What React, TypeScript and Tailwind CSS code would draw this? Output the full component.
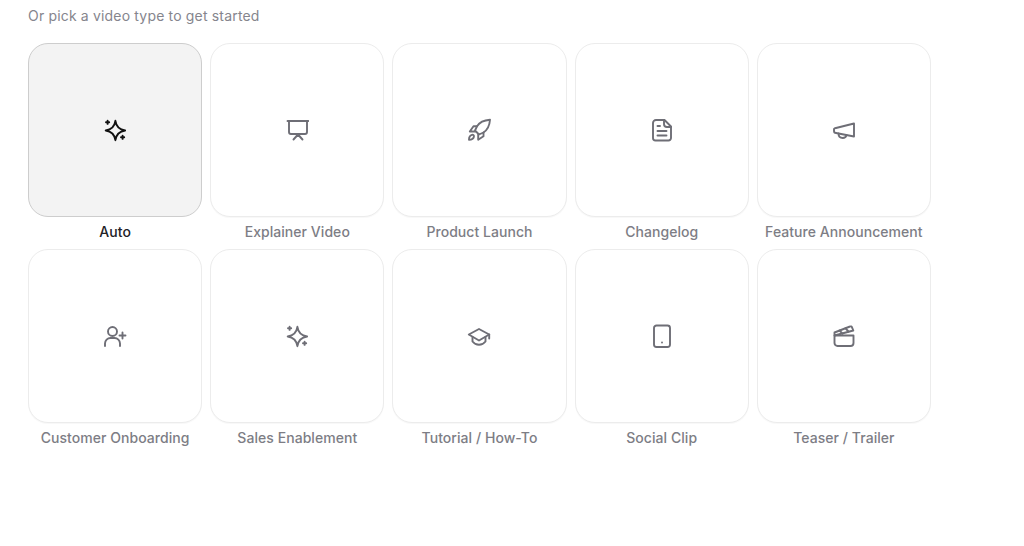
import { ReactNode } from "react";

const S = ({ children }: { children: ReactNode }) => (
  <svg width="24" height="24" viewBox="0 0 24 24" fill="none" stroke="currentColor" strokeWidth="1.9" strokeLinecap="round" strokeLinejoin="round">
    {children}
  </svg>
);

const Sparkle = () => (
  <S>
    <path d="M12.400 2.800C13.200 8.500 16 11.500 22.100 12.500 16 13.500 13.200 16.500 12.400 22.200 11.600 16.500 8.800 13.500 2.700 12.500 8.800 11.500 11.600 8.500 12.400 2.800Z" />
    <path d="M4.600 2.700v3.200M3 4.300h3.200" />
    <path d="M19.600 17.700v3.200M18 19.300h3.200" />
  </S>
);

const icons: Record<string, ReactNode> = {
  auto: <Sparkle />,
  explainer: (
    <S>
      <path d="M2.500 3h21" />
      <path d="M4 3v11a2 2 0 0 0 2 2h14a2 2 0 0 0 2-2V3" />
      <path d="m8.500 21.500 4.500-5 4.500 5" />
    </S>
  ),
  rocket: (
    <S>
      <path d="M23 1.800C16.500 2.300 12.500 4.300 10 8.300L8 12.500l4 4 4.500-2C20.500 12 22.500 8.300 23 1.800Z" />
      <path d="M10 8.300H6.500L2.800 13.500h5.400" />
      <path d="M16.500 14.500v3.700l-5.300 3.500v-5.400" />
      <path d="M5 16.800c-2 .5-3 2.300-3 4.900 2.600 0 4.400-1 4.900-3 .3-1.200-.7-2.200-1.900-1.900Z" />
    </S>
  ),
  file: (
    <S>
      <path d="M6 2h8.500L21 8.500V20a2.500 2.500 0 0 1-2.500 2.500h-13A2.500 2.500 0 0 1 3 20V5a3 3 0 0 1 3-3Z" />
      <path d="M14 2v4a3 3 0 0 0 3 3h4" />
      <path d="M7.500 8h2.500M7.500 13h9M7.500 17.500h9" />
    </S>
  ),
  megaphone: (
    <S>
      <path d="M22 5.500v13L4 15a2 2 0 0 1-2-2v-2a2 2 0 0 1 2-1L22 5.500Z" />
      <path d="M6.500 15.500c0 3 1.700 4.500 4.300 4.500 2 0 3.200-1 3.700-3" />
    </S>
  ),
  user: (
    <S>
      <circle cx="9.500" cy="7.500" r="4.500" />
      <path d="M2 22v-2.500A5.500 5.500 0 0 1 7.500 14h4a5.500 5.500 0 0 1 5.500 5.500V22" />
      <path d="M19.500 8.500v6M16.500 11.500h6" />
    </S>
  ),
  sales: <Sparkle />,
  school: (
    <S>
      <path d="M12 5 1.800 10.500 12 16.500l10.200-6L12 5Z" />
      <path d="M5.500 13v4.500c1.700 2.200 3.800 3.300 6.500 3.300s4.800-1.100 6.500-3.300V13" />
      <path d="M22.200 10.500v4" />
    </S>
  ),
  phone: (
    <S>
      <rect x="4" y="1.500" width="16" height="21.500" rx="2.500" />
      <path d="M12 18.500h.01" />
    </S>
  ),
  clapper: (
    <S>
      <path d="M2.500 11.500h19V19a3 3 0 0 1-3 3h-13a3 3 0 0 1-3-3v-7.500Z" />
      <path d="M2.500 11.500V8.500L18 2.500a1.500 1.500 0 0 1 2 .8l1.300 3.200L2.500 11.500Z" />
      <path d="m7.500 6.500 3 3.200M13.500 4.300l3 3.200" />
    </S>
  ),
};

const items = [
  ["Auto", "auto"],
  ["Explainer Video", "explainer"],
  ["Product Launch", "rocket"],
  ["Changelog", "file"],
  ["Feature Announcement", "megaphone"],
  ["Customer Onboarding", "user"],
  ["Sales Enablement", "sales"],
  ["Tutorial / How-To", "school"],
  ["Social Clip", "phone"],
  ["Teaser / Trailer", "clapper"],
];

export default function App() {
  return (
    <div className="min-h-[546px] bg-white pl-7 pt-2 font-['Inter',sans-serif]">
      <p className="mb-[19px] text-[14px] leading-4 tracking-[0.17px] text-[#85858d]">Or pick a video type to get started</p>
      <div className="grid w-[903px] grid-cols-5 gap-x-2">
        {items.map(([label, key], i) => (
          <div key={label} className="flex h-[206px] flex-col items-center">
            <div
              className={
                i === 0
                  ? "flex h-[174px] w-full items-center justify-center rounded-[20px] border border-[#cdcdcd] bg-[#f3f3f3] text-[#111111]"
                  : "flex h-[174px] w-full items-center justify-center rounded-[20px] border border-[#ececec] bg-white text-[#6e6e76] shadow-[0_1px_1px_rgba(0,0,0,0.03)]"
              }
            >
              {icons[key]}
            </div>
            <span
              className={
                i === 0
                  ? "mt-[5px] whitespace-nowrap text-[14px] leading-5 font-medium tracking-[0.05px] text-[#222226]"
                  : "mt-[5px] whitespace-nowrap text-[14px] leading-5 font-medium tracking-[0.05px] text-[#7d7d85]"
              }
            >
              {label}
            </span>
          </div>
        ))}
      </div>
    </div>
  );
}
